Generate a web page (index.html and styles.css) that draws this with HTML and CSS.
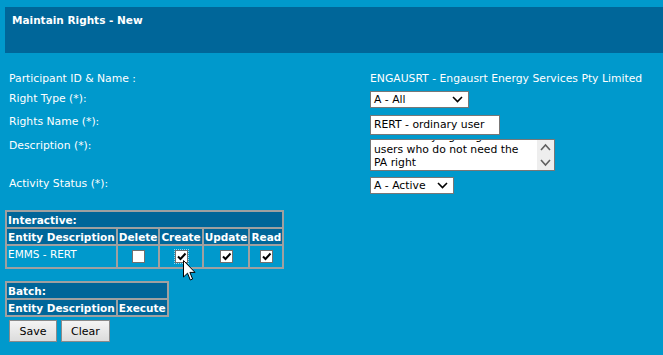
FILE: index.html
```html
<!DOCTYPE html>
<html lang="en">

<head>
    <meta charset="UTF-8">
    <meta name="viewport" content="width=device-width, initial-scale=1.0">
    <title>Maintain Rights - New</title>
    <link rel="stylesheet" href="styles.css">
</head>

<body>
    <div class="page-title">Maintain Rights - New</div>

    <div class="form-grid">
        <div class="label row-participant">Participant ID &amp; Name :</div>
        <div class="value row-participant">ENGAUSRT - Engausrt Energy Services Pty Limited</div>

        <div class="label row-type">Right Type (*):</div>
        <div class="value row-type">
            <div class="select-box type-select">
                <span>A - All</span>
                <svg class="chevron" width="11" height="7" viewBox="0 0 11 7"><path d="M1 1 L5.5 5.5 L10 1" fill="none" stroke="#000" stroke-width="1.6"/></svg>
            </div>
        </div>

        <div class="label row-name">Rights Name (*):</div>
        <div class="value row-name">
            <div class="text-box name-input">RERT - ordinary user</div>
        </div>

        <div class="label row-desc">Description (*):</div>
        <div class="value row-desc">
            <div class="text-area">
                <div class="text-area-text">
                    <div>for ordinary rights given to</div>
                    <div>users who do not need the</div>
                    <div>PA right</div>
                </div>
                <div class="scroll-bar">
                    <svg width="11" height="8" viewBox="0 0 11 8"><path d="M1 7 L5.5 2 L10 7" fill="none" stroke="#606060" stroke-width="1.6"/></svg>
                    <svg width="11" height="8" viewBox="0 0 11 8"><path d="M1 1 L5.5 6 L10 1" fill="none" stroke="#606060" stroke-width="1.6"/></svg>
                </div>
            </div>
        </div>

        <div class="label row-status">Activity Status (*):</div>
        <div class="value row-status">
            <div class="select-box status-select">
                <span>A - Active</span>
                <svg class="chevron" width="11" height="7" viewBox="0 0 11 7"><path d="M1 1 L5.5 5.5 L10 1" fill="none" stroke="#000" stroke-width="1.6"/></svg>
            </div>
        </div>
    </div>

    <table class="rights-table interactive">
        <tr><th colspan="5" class="group">Interactive:</th></tr>
        <tr>
            <th class="entity">Entity Description</th>
            <th>Delete</th>
            <th>Create</th>
            <th>Update</th>
            <th>Read</th>
        </tr>
        <tr class="data-row">
            <td class="entity">EMMS - RERT</td>
            <td class="check-cell"><span class="check"></span></td>
            <td class="check-cell"><span class="check checked focused"><svg width="11" height="11" viewBox="0 0 11 11"><path d="M2 5.5 L4.5 8 L9.5 2.5" fill="none" stroke="#000" stroke-width="2"/></svg></span></td>
            <td class="check-cell"><span class="check checked"><svg width="11" height="11" viewBox="0 0 11 11"><path d="M2 5.5 L4.5 8 L9.5 2.5" fill="none" stroke="#000" stroke-width="2"/></svg></span></td>
            <td class="check-cell"><span class="check checked"><svg width="11" height="11" viewBox="0 0 11 11"><path d="M2 5.5 L4.5 8 L9.5 2.5" fill="none" stroke="#000" stroke-width="2"/></svg></span></td>
        </tr>
    </table>

    <table class="rights-table batch">
        <tr><th colspan="2" class="group">Batch:</th></tr>
        <tr>
            <th class="entity">Entity Description</th>
            <th>Execute</th>
        </tr>
    </table>

    <div class="buttons">
        <button class="btn save">Save</button>
        <button class="btn clear">Clear</button>
    </div>

    <svg class="cursor" width="13" height="22" viewBox="0 0 13 22">
        <path d="M0.5 0.5 L0.5 17 L4.5 13.2 L7.3 20 L9.6 19 L6.9 12.4 L12 12.4 Z" fill="#fff" stroke="#000" stroke-width="1"/>
    </svg>
</body>

</html>
```

FILE: styles.css
```css
*,
*::before,
*::after {
    box-sizing: border-box;
}

body {
    margin: 0px;
    padding: 7px 0px 0px 5px;
    background: #0099cc;
    font-family: Tahoma, "DejaVu Sans", Verdana, sans-serif;
    font-size: 10.8px;
    color: #ffffff;
    position: relative;
    height: 355px;
    overflow: hidden;
}

.page-title {
    background: #006699;
    height: 46px;
    padding: 7px 7px;
    font-weight: bold;
    font-size: 10.5px;
}

.form-grid {
    display: grid;
    grid-template-columns: 361px auto;
    grid-template-rows: 19px 23px 25px 38px 20px;
    margin-top: 19px;
    padding-left: 4px;
}

.label,
.value {
    display: flex;
    align-items: flex-start;
}

.row-type.label,
.row-name.label {
    padding-top: 1px;
}

.select-box,
.text-box,
.text-area {
    background: #ffffff;
    border: 1px solid #777777;
    color: #000000;
    font-size: 10.8px;
}

.select-box {
    height: 17px;
    display: flex;
    align-items: center;
    justify-content: space-between;
    padding: 0px 5px 0px 3px;
}

.type-select {
    width: 99px;
}

.status-select {
    width: 84px;
}

.text-box {
    width: 130px;
    height: 20px;
    padding: 2px 3px;
    margin-top: 1px;
}

.text-area {
    width: 185px;
    height: 32px;
    display: flex;
    overflow: hidden;
}

.text-area-text {
    flex: 1;
    padding: 0px 3px;
    line-height: 13px;
    margin-top: -10px;
    white-space: nowrap;
}

.scroll-bar {
    width: 17px;
    background: #eeeeee;
    display: flex;
    flex-direction: column;
    align-items: center;
    justify-content: space-between;
    padding: 3px 0px 3px;
}

.rights-table {
    border-collapse: separate;
    border-spacing: 2px;
    background: #a0a0a0;
    font-size: 10.5px;
}

.rights-table th {
    background: #006699;
    text-align: left;
    font-weight: bold;
    padding: 0px 1px;
    height: 15px;
    white-space: nowrap;
}

.rights-table td {
    background: #0099cc;
    vertical-align: top;
    padding: 2px 1px;
    height: 21px;
}

.interactive {
    margin-top: 13px;
}

.batch {
    margin-top: 12px;
}

.check-cell {
    text-align: center;
}

.check {
    display: inline-block;
    width: 13px;
    height: 13px;
    background: #ffffff;
    border: 1px solid #707070;
    margin-top: 2px;
}

.check svg {
    display: block;
}

.focused {
    outline: 1px dotted rgba(255, 255, 255, 0.6);
}

.buttons {
    display: flex;
    gap: 4px;
    padding: 3px 0px 0px 4px;
}

.btn {
    font-family: Tahoma, "DejaVu Sans", Verdana, sans-serif;
    font-size: 11px;
    color: #000000;
    background: linear-gradient(#f4f4f4, #dcdcdc);
    border: 1px solid #8a8a8a;
    height: 22px;
    padding: 0px;
}

.save {
    width: 48px;
}

.clear {
    width: 49px;
}

.cursor {
    position: absolute;
    left: 183px;
    top: 260px;
}
```
